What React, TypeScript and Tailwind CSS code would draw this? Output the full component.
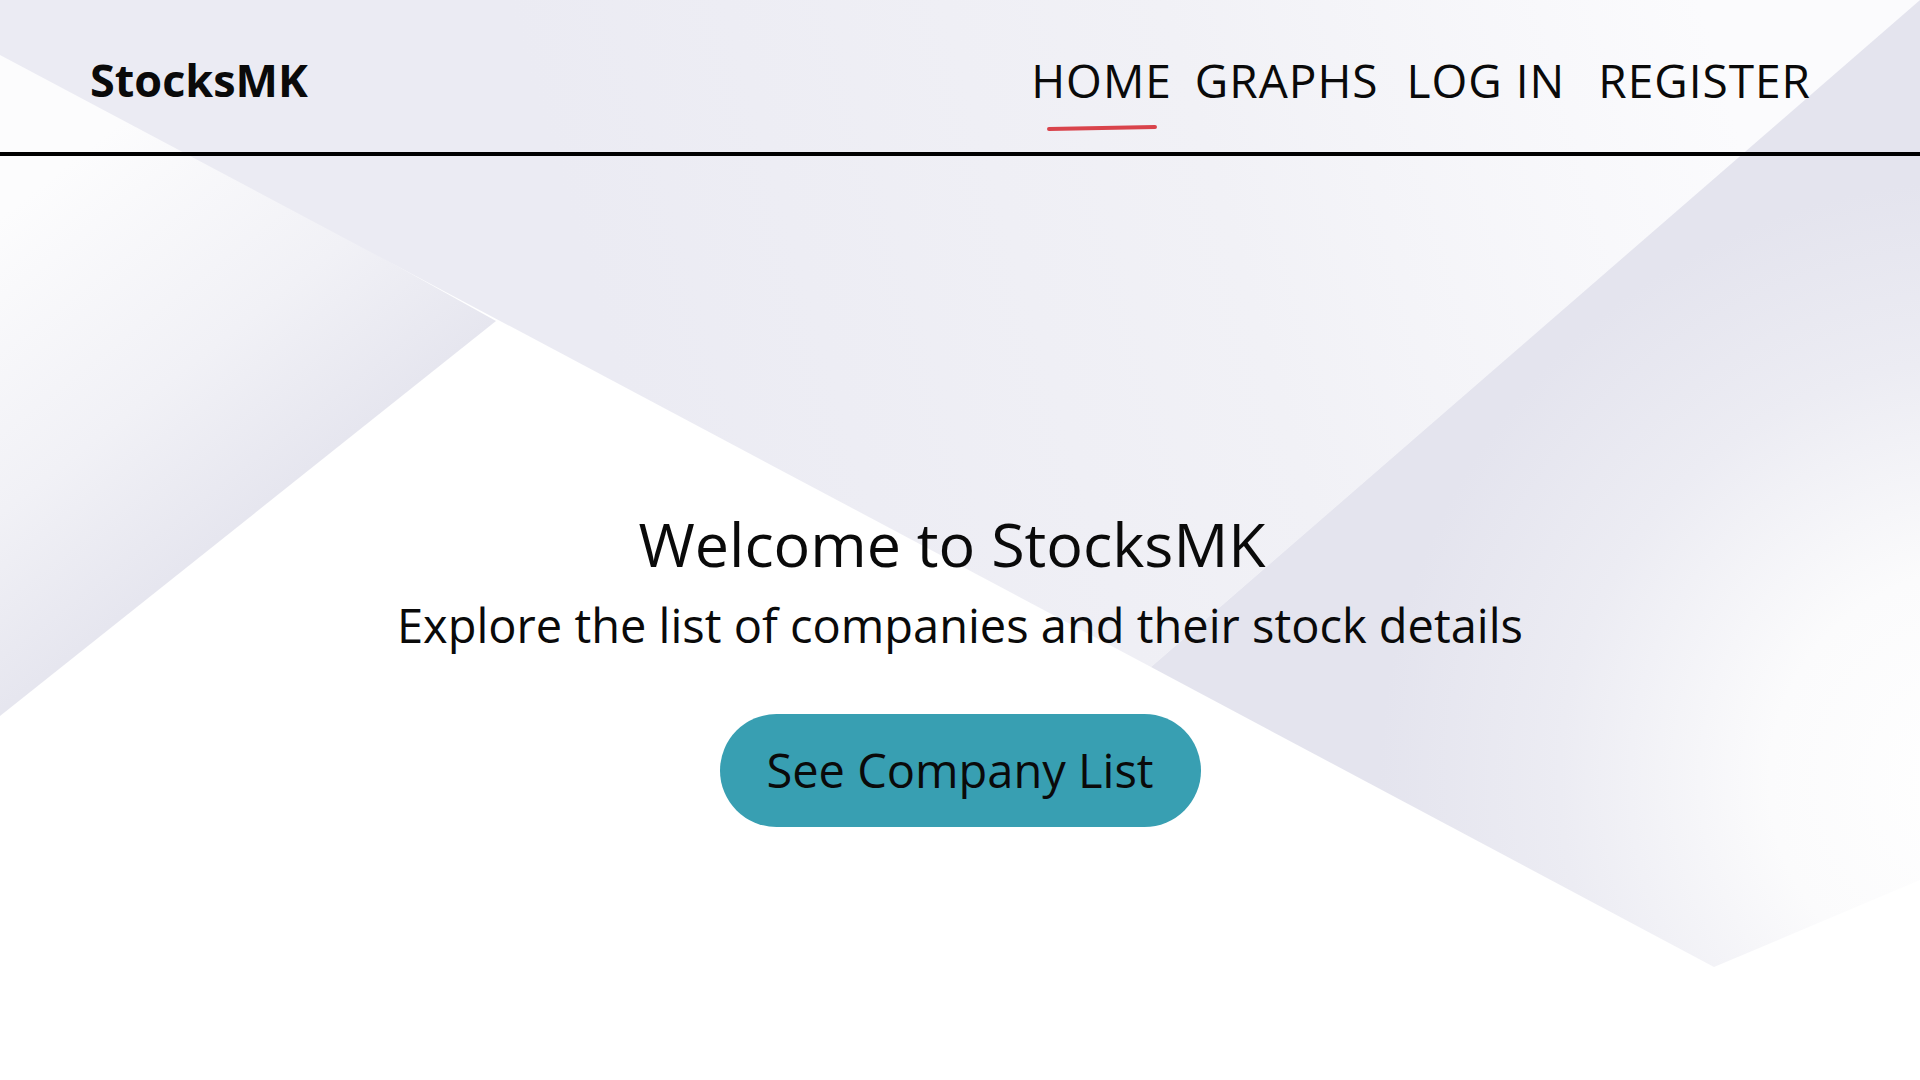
import React from "react";

const navLinks = [
  { label: "HOME", gap: "", active: true },
  { label: "GRAPHS", gap: "ml-[23px]", active: false },
  { label: "LOG IN", gap: "ml-[28px]", active: false },
  { label: "REGISTER", gap: "ml-[33px]", active: false },
];

// soft folded-paper background
const Backdrop = () => (
  <svg
    className="absolute inset-0 h-full w-full"
    viewBox="0 0 1920 1080"
    preserveAspectRatio="none"
  >
    <defs>
      <linearGradient id="topFold" gradientUnits="userSpaceOnUse" x1="600" y1="320" x2="1700" y2="0">
        <stop offset="0" stopColor="#ebebf3" />
        <stop offset="0.55" stopColor="#f1f1f6" />
        <stop offset="1" stopColor="#fbfbfd" />
      </linearGradient>
      <radialGradient id="rightFold" gradientUnits="userSpaceOnUse" cx="1980" cy="780" r="600">
        <stop offset="0" stopColor="#ffffff" />
        <stop offset="0.35" stopColor="#fbfbfc" />
        <stop offset="0.7" stopColor="#ececf3" />
        <stop offset="1" stopColor="#e4e4ee" />
      </radialGradient>
      <linearGradient id="leftFold" gradientUnits="userSpaceOnUse" x1="60" y1="170" x2="300" y2="475">
        <stop offset="0" stopColor="#fcfcfd" />
        <stop offset="0.6" stopColor="#f1f1f6" />
        <stop offset="1" stopColor="#e6e6ef" />
      </linearGradient>
    </defs>
    <polygon points="0,45 496,321 0,716" fill="url(#leftFold)" />
    <polygon points="0,0 1920,0 1151,667 0,55" fill="url(#topFold)" />
    <polygon points="1920,0 1151,667 1714,967 1920,880" fill="url(#rightFold)" />
  </svg>
);

export default function App() {
  return (
    <div className="relative h-screen w-full overflow-hidden bg-white text-[#0a0a0a] font-['Open_Sans',sans-serif]">
      <Backdrop />

      <div className="relative flex flex-col">
        {/* header */}
        <header className="flex h-[156px] items-start border-b-4 border-black pt-[57px] pl-[90px] pr-[109px]">
          <div className="text-[45px] font-bold leading-none">StocksMK</div>
          <nav className="ml-auto flex items-start">
            {navLinks.map((link) => (
              <a
                key={link.label}
                href="#"
                className={`flex flex-col items-center text-[46px] leading-none tracking-[1px] whitespace-nowrap ${link.gap}`}
              >
                <span>{link.label}</span>
                {link.active && (
                  <span className="mt-[23px] h-[4px] w-[110px] -rotate-1 rounded-sm bg-[#d9434b]" />
                )}
              </a>
            ))}
          </nav>
        </header>

        {/* hero */}
        <section className="flex flex-col items-center pt-[357px] text-center">
          <h1 className="mr-[16px] text-[61px] font-normal leading-none">Welcome to StocksMK</h1>
          <p className="mt-[28px] text-[47px] leading-none">
            Explore the list of companies and their stock details
          </p>
          <button className="mt-[65px] flex h-[113px] w-[481px] items-center justify-center rounded-full bg-[#389fb2] text-[47px] leading-none text-[#0a0a0a]">
            See Company List
          </button>
        </section>
      </div>
    </div>
  );
}
